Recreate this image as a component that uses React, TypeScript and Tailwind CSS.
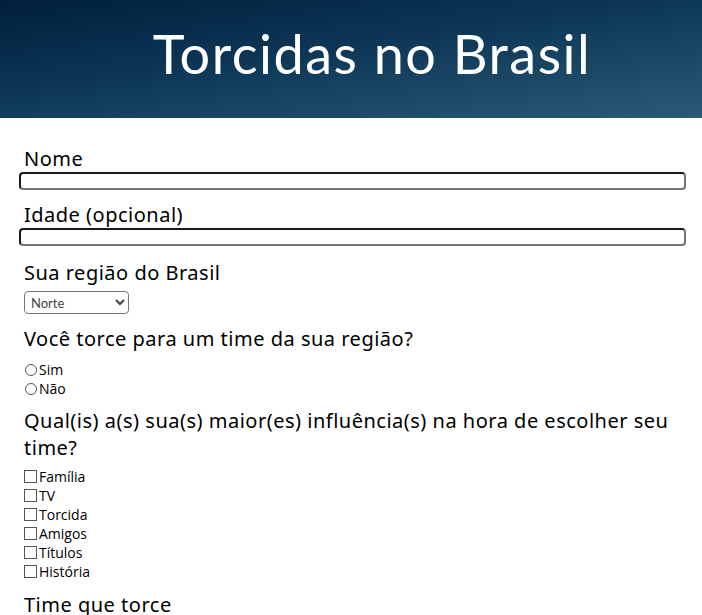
export default function App() {
  const influences = ["Família", "TV", "Torcida", "Amigos", "Títulos", "História"];

  return (
    <div className="min-h-screen bg-white text-black">
      <header className="flex h-[118px] items-center justify-center bg-[linear-gradient(172deg,#01203c_0%,#0b3454_40%,#2b5a76_100%)] pb-[10px] pl-[42px]">
        <h1 className="font-['Lato',sans-serif] text-[54px] font-normal leading-none tracking-[1.5px] text-white">
          Torcidas no Brasil
        </h1>
      </header>

      <form className="pl-[19px] pr-[16px] pt-[28px] font-['Noto_Sans',sans-serif] tracking-[0.5px]">
        <div>
          <label className="block pl-[5px] text-[20px] leading-[26px]">Nome</label>
          <input
            type="text"
            className="block h-[18px] w-full rounded-[4px] border-2 border-t-[#1a1a1a] border-l-[#1a1a1a] border-r-[#767676] border-b-[#767676]"
          />
        </div>

        <div className="mt-[12px]">
          <label className="block pl-[5px] text-[20px] leading-[26px]">Idade (opcional)</label>
          <input
            type="text"
            className="block h-[18px] w-full rounded-[4px] border-2 border-t-[#1a1a1a] border-l-[#1a1a1a] border-r-[#767676] border-b-[#767676]"
          />
        </div>

        <div className="mt-[14px] pl-[5px]">
          <label className="block text-[20px] leading-[26px]">Sua região do Brasil</label>
          <select className="mt-[5px] h-[23px] w-[105px] rounded-[4px] border border-[#767676] bg-white pl-[2px] font-['Lato',sans-serif] text-[13px] tracking-normal text-[#444]">
            <option>Norte</option>
            <option>Nordeste</option>
            <option>Centro-Oeste</option>
            <option>Sudeste</option>
            <option>Sul</option>
          </select>
        </div>

        <div className="mt-[12px] pl-[5px]">
          <p className="text-[20px] leading-[26px]">Você torce para um time da sua região?</p>
          <div className="mt-[8px] font-['Open_Sans',sans-serif] text-[14px] leading-[19px] tracking-normal">
            {["Sim", "Não"].map((o) => (
              <label key={o} className="flex items-center">
                <span className="ml-px mr-[2px] inline-block h-[12px] w-[12px] rounded-full border border-[#555]" />
                {o}
              </label>
            ))}
          </div>
        </div>

        <div className="mt-[9px] pl-[5px]">
          <p className="text-[20px] leading-[27px]">
            Qual(is) a(s) sua(s) maior(es) influência(s) na hora de escolher seu time?
          </p>
          <div className="mt-[6px] font-['Open_Sans',sans-serif] text-[14px] leading-[19px] tracking-normal">
            {influences.map((o) => (
              <label key={o} className="flex items-center">
                <span className="mr-[2px] inline-block h-[13px] w-[13px] border border-[#555]" />
                {o}
              </label>
            ))}
          </div>
        </div>

        <div className="mt-[11px] pl-[5px]">
          <p className="text-[20px] leading-[26px]">Time que torce</p>
        </div>
      </form>
    </div>
  );
}
